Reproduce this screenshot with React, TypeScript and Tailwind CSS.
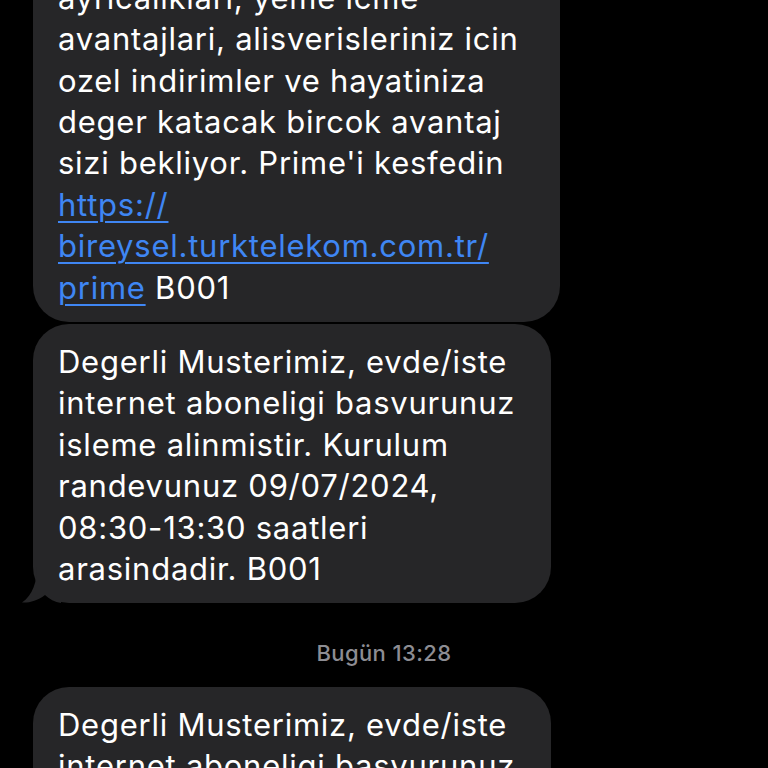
import React from "react";

const font = { fontFamily: "Inter, 'Noto Sans', 'Liberation Sans', sans-serif" };

function Lines({ lines }: { lines: React.ReactNode[] }) {
  return (
    <div className="relative">
      {lines.map((l, i) => (
        <div key={i} className="whitespace-nowrap">
          {l}
        </div>
      ))}
    </div>
  );
}

const Link = ({ children }: { children: React.ReactNode }) => (
  <span className="text-[#3f86f4] underline decoration-[2px] underline-offset-[5px]">{children}</span>
);

export default function App() {
  return (
    <div
      className="w-[768px] h-[768px] overflow-hidden bg-black text-white"
      style={font}
    >
      <div className="flex flex-col mt-[-122px]">
        <div className="pl-[33px]">
          <div className="w-[527px] rounded-[36px] bg-[#262628] pl-[25px] pt-[16px] pb-[14px] text-[31px] leading-[41.4px] tracking-[0.75px]">
            <Lines
              lines={[
                "Turk Telekom Prime ile",
                "dijital platform",
                "ayricaliklari, yeme icme",
                "avantajlari, alisverisleriniz icin",
                "ozel indirimler ve hayatiniza",
                "deger katacak bircok avantaj",
                "sizi bekliyor. Prime'i kesfedin",
                <Link>https://</Link>,
                <Link>bireysel.turktelekom.com.tr/</Link>,
                <>
                  <Link>prime</Link> B001
                </>,
              ]}
            />
          </div>
        </div>

        <div className="pl-[33px] mt-[2px]">
          <div className="relative w-[518px] rounded-[36px] bg-[#262628] pl-[25px] pt-[17px] pb-[13px] text-[31px] leading-[41.4px] tracking-[0.75px]">
            <svg
              className="absolute left-[-12px] bottom-0"
              width="40"
              height="36"
              viewBox="0 0 40 36"
            >
              <path
                d="M16 0 C16 14 12 28 1 35.5 C8 36 16 34 24 28 C28 32 34 35 40 36 L40 0 Z"
                fill="#262628"
              />
            </svg>
            <Lines
              lines={[
                "Degerli Musterimiz, evde/iste",
                "internet aboneligi basvurunuz",
                "isleme alinmistir. Kurulum",
                "randevunuz 09/07/2024,",
                "08:30-13:30 saatleri",
                "arasindadir. B001",
              ]}
            />
          </div>
        </div>

        <div className="flex justify-center pt-[36px] pb-[20px]">
          <span className="text-[22px] leading-[28px] font-medium text-[#8d8d93] tracking-[0.4px]">
            Bugün 13:28
          </span>
        </div>

        <div className="pl-[33px]">
          <div className="w-[518px] rounded-[36px] bg-[#262628] pl-[25px] pt-[17px] pb-[13px] text-[31px] leading-[41.4px] tracking-[0.75px]">
            <Lines
              lines={[
                "Degerli Musterimiz, evde/iste",
                "internet aboneligi basvurunuz",
                "isleme alinmistir. Kurulum",
                "randevunuz 09/07/2024,",
              ]}
            />
          </div>
        </div>
      </div>
    </div>
  );
}
